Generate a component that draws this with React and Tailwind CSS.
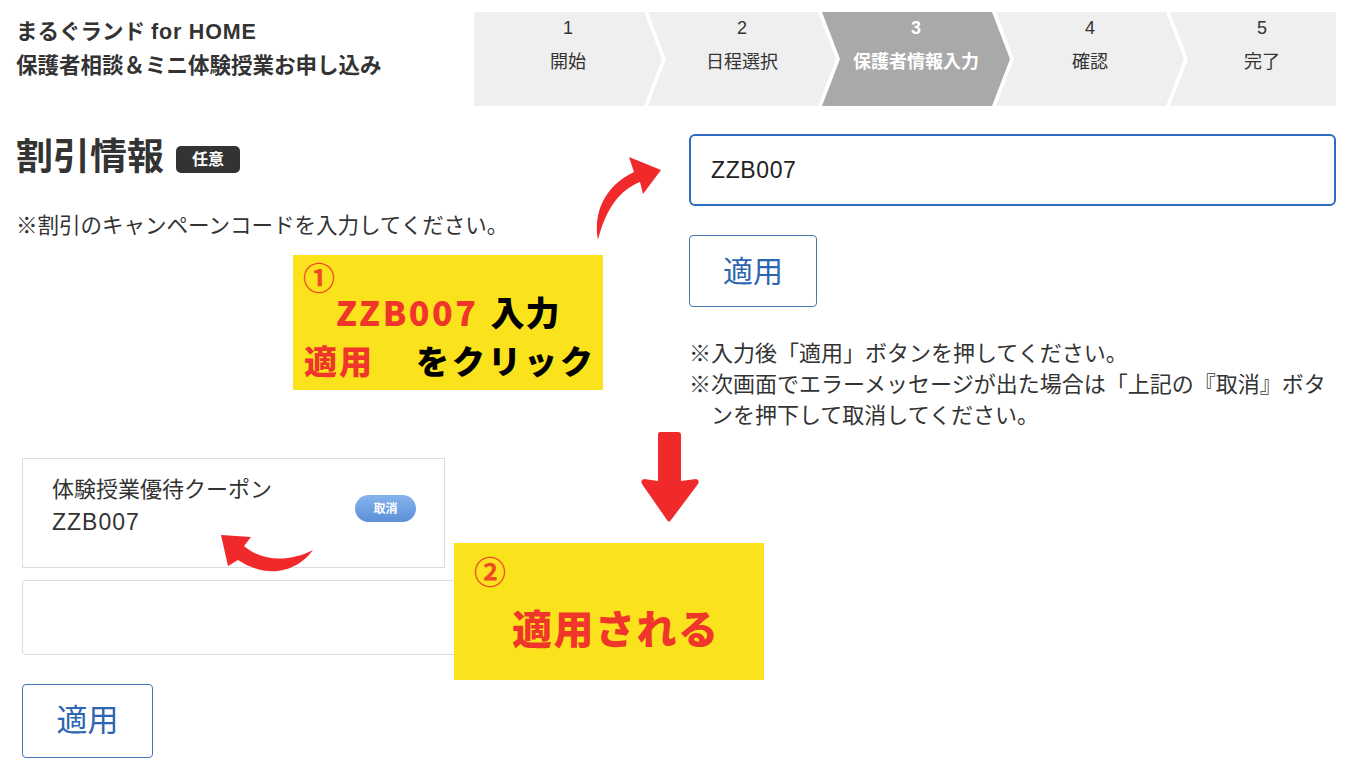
import React from "react";

const steps = [
  { n: "1", label: "開始" },
  { n: "2", label: "日程選択" },
  { n: "3", label: "保護者情報入力", active: true },
  { n: "4", label: "確認" },
  { n: "5", label: "完了" },
];

function StepBar() {
  return (
    <div className="flex h-[94px] w-[862px]">
      {steps.map((s, i) => {
        const first = i === 0;
        const last = i === steps.length - 1;
        const clip = first
          ? "polygon(0 0, calc(100% - 18px) 0, 100% 50%, calc(100% - 18px) 100%, 0 100%)"
          : last
          ? "polygon(0 0, 100% 0, 100% 100%, 0 100%, 18px 50%)"
          : "polygon(0 0, calc(100% - 18px) 0, 100% 50%, calc(100% - 18px) 100%, 0 100%, 18px 50%)";
        return (
          <div
            key={s.n}
            style={{ clipPath: clip }}
            className={
              "flex flex-col items-center pt-0 " +
              (last ? "flex-1 pl-[18px] " : "w-[188px] shrink-0 -mr-[14px] ") +
              (s.active ? "bg-[#a9a9a9] text-white font-bold" : "bg-[#efefef] text-[#333]")
            }
          >
            <div className="text-[18px] leading-[30px] mt-[1px]">{s.n}</div>
            <div className="text-[18px] leading-[30px] mt-[4px]">{s.label}</div>
          </div>
        );
      })}
    </div>
  );
}

function Arrows() {
  return (
    <svg
      className="absolute left-0 top-0 pointer-events-none"
      width="1360"
      height="780"
      viewBox="0 0 1360 780"
    >
      <path
        fill="#f0292b"
        d="M598,240 C593,212 605,186 634,172 L629,157 L661,170 L643,194 L640,182 C620,190 606,208 598,240 Z"
      />
      <path
        fill="#f0292b"
        d="M221,535 L251,537 L244,546 C262,562 290,562 313,550 C300,568 272,582 238,560 L228,566 Z"
      />
      <path
        fill="#f0292b"
        d="M660,432 L678,432 Q681,432 681,435 L681,481 L696,479 Q700,480 698,484 L671,520 Q669,523 667,520 L642,484 Q640,480 644,479 L658,481 L658,435 Q658,432 660,432 Z"
      />
    </svg>
  );
}

export default function App() {
  return (
    <div className="relative w-[1360px] h-[780px] overflow-hidden bg-white text-[#333] font-['Liberation_Sans','Noto_Sans_CJK_JP',sans-serif]">
      {/* header */}
      <div className="flex pt-[12px] pl-[16px] pr-[24px]">
        <div className="w-[458px] pt-[3px] font-semibold text-[21.5px] leading-[34px] text-[#333]">
          <div>
            まるぐランド <span className="tracking-[0.8px]">for HOME</span>
          </div>
          <div>保護者相談＆ミニ体験授業お申し込み</div>
        </div>
        <StepBar />
      </div>

      {/* main */}
      <div className="flex mt-[28px]">
        <div className="w-[689px] shrink-0 pl-[16px]">
          <div className="flex items-center h-[48px]">
            <h2 className="text-[37px] font-bold leading-[48px] text-[#333]">割引情報</h2>
            <span className="ml-[12px] mt-[2px] bg-[#333] text-white text-[16px] font-bold rounded-[5px] px-[16px] leading-[27px]">
              任意
            </span>
          </div>
          <p className="mt-[30px] text-[21.5px] leading-[28px]">※割引のキャンペーンコードを入力してください。</p>
        </div>
        <div className="w-[647px] shrink-0">
          <div className="h-[72px] border-2 border-[#2d6cc0] rounded-[6px] flex items-center pl-[20px] text-[23px] tracking-[0.6px] text-[#222]">
            ZZB007
          </div>
          <button className="mt-[29px] w-[128px] h-[72px] border border-[#4677b5] rounded-[4px] text-[30px] text-[#2d66b0] bg-white">
            適用
          </button>
          <div className="mt-[31px] text-[22px] leading-[31px] text-[#333]">
            <div>※入力後「適用」ボタンを押してください。</div>
            <div className="whitespace-nowrap">※次画面でエラーメッセージが出た場合は「上記の『取消』ボタ</div>
            <div className="pl-[22px]">ンを押下して取消してください。</div>
          </div>
        </div>
      </div>

      {/* bottom */}
      <div className="mt-[27px] ml-[22px]">
        <div className="w-[423px] h-[110px] border border-[#dcdcdc] flex justify-between pl-[29px] pr-[28px] pt-[15px]">
          <div className="text-[22px] leading-[32px] text-[#333]">
            <div>体験授業優待クーポン</div>
            <div className="tracking-[1px] text-[23px]">ZZB007</div>
          </div>
          <span className="mt-[21px] h-[27px] w-[61px] rounded-full bg-gradient-to-b from-[#86b4ec] to-[#5b8fd8] text-white text-[12px] font-bold flex items-center justify-center">
            取消
          </span>
        </div>
        <div className="mt-[12px] w-[578px] h-[75px] border border-[#dcdcdc] rounded-[4px]"></div>
        <button className="mt-[29px] w-[131px] h-[74px] border border-[#4677b5] rounded-[4px] text-[31px] text-[#2d66b0] bg-white">
          適用
        </button>
      </div>

      {/* annotations */}
      <div className="absolute left-[293px] top-[255px] w-[310px] h-[135px] bg-[#fae31c] font-['Noto_Sans_CJK_JP',sans-serif] font-black">
        <div className="absolute left-[10px] top-[3px] text-[32px] leading-[36px] text-[#f04a24] font-bold">①</div>
        <div className="absolute left-[43px] top-[37px] text-[34px] leading-[40px] whitespace-nowrap">
          <span className="text-[#f0362b] tracking-[2.5px]">ZZB007</span>
          <span className="text-black ml-[12px] tracking-[1px]">入力</span>
        </div>
        <div className="absolute left-[11px] top-[85px] text-[33px] leading-[40px] whitespace-nowrap">
          <span className="text-[#f0362b] tracking-[2px]">適用</span>
          <span className="text-black ml-[42px] tracking-[3px]">をクリック</span>
        </div>
      </div>

      <div className="absolute left-[454px] top-[543px] w-[310px] h-[137px] bg-[#fae31c] font-['Noto_Sans_CJK_JP',sans-serif]">
        <div className="absolute left-[20px] top-[8px] text-[32px] leading-[38px] text-[#f04a24] font-bold">②</div>
        <div className="absolute left-[58px] top-[60px] text-[40px] leading-[48px] tracking-[1.5px] text-[#f0362b] font-black whitespace-nowrap">
          適用される
        </div>
      </div>

      <Arrows />
    </div>
  );
}
